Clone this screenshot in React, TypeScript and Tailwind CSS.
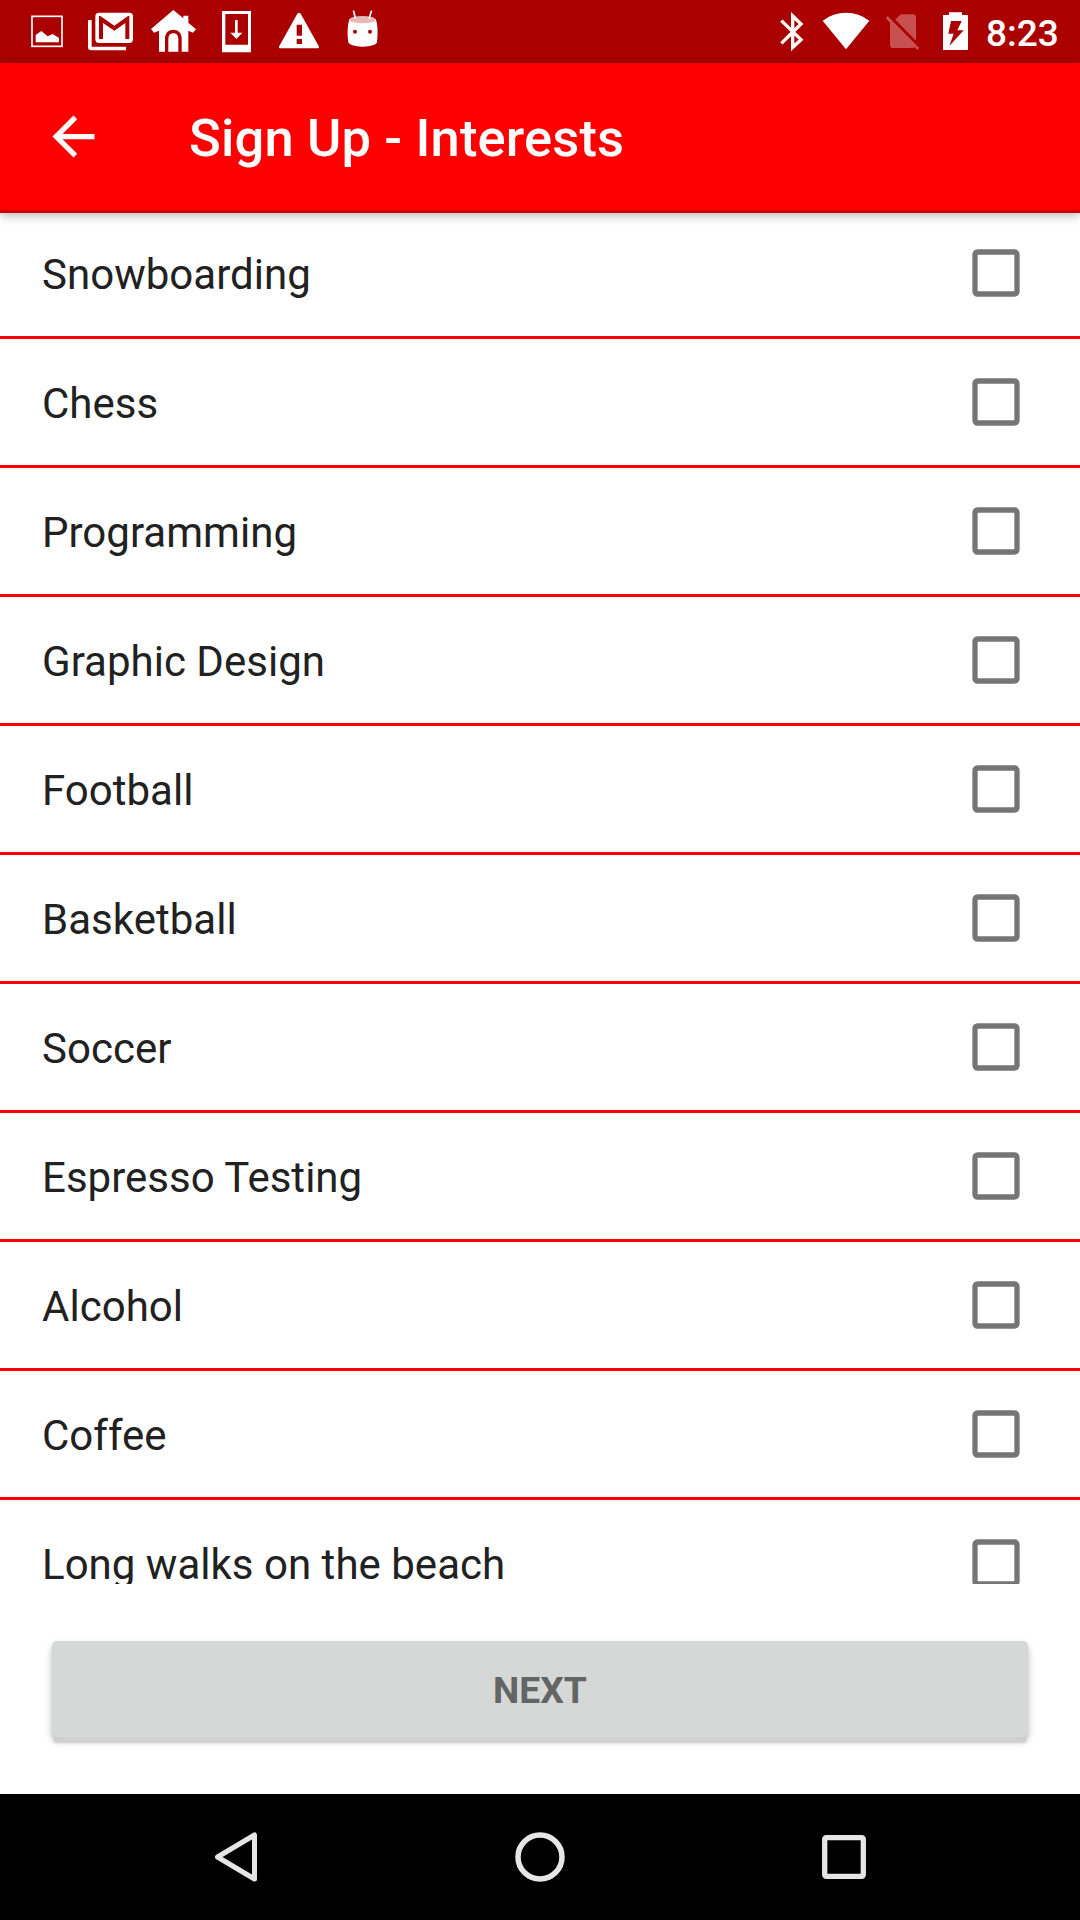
import React from "react";

const interests = [
  "Snowboarding",
  "Chess",
  "Programming",
  "Graphic Design",
  "Football",
  "Basketball",
  "Soccer",
  "Espresso Testing",
  "Alcohol",
  "Coffee",
  "Long walks on the beach",
];

function StatusBar() {
  return (
    <div className="flex h-[63px] shrink-0 justify-between bg-[#ab0000] text-white">
      <div className="flex">
        <svg className="h-[63px] w-[76px]" viewBox="0 0 228 189" fill="currentColor">
          <rect x="96" y="49" width="90" height="90" fill="none" stroke="currentColor" strokeWidth="5" />
          <path d="M107 127V105L124 93L143 109L158 102L177 114V127Z" />
        </svg>
        <svg className="h-[63px] w-[64px]" viewBox="228 0 192 189" fill="currentColor">
          <path d="M264 60H275V140H378V151H274Q264 151 264 141Z" />
          <path
            fillRule="evenodd"
            d="M297 38H388Q399 38 399 49V118Q399 129 388 129H297Q286 129 286 118V49Q286 38 297 38ZM297 48V117H309V69L343 92L376 69V117H388V48H384L343 77L301 48Z"
          />
        </svg>
        <svg className="h-[63px] w-[64px]" viewBox="420 0 192 189" fill="currentColor">
          <path d="M520 30L550 55V47H565V68L588 88L579 98L565 92V155H545V112Q542 89 520 89Q498 89 495 112V155H477V92L462 98L453 87Z" />
          <path d="M505 155V116Q506 100 520 100Q534 100 535 116V155Z" />
        </svg>
        <svg className="h-[63px] w-[64px]" viewBox="612 0 192 189" fill="currentColor">
          <path fillRule="evenodd" d="M666 33H753V157H666ZM676 42V134H744V42Z" />
          <path d="M705 60H713V98H727L709 117L691 98H705Z" />
        </svg>
        <svg className="h-[63px] w-[62px]" viewBox="804 0 186 189" fill="currentColor">
          <path
            fillRule="evenodd"
            d="M892 41Q897 36 902 41L956 138Q959 145 953 145H841Q835 145 838 138ZM890 74V107H906V74ZM890 117V132H906V117Z"
          />
        </svg>
        <svg className="h-[63px] w-[60px]" viewBox="990 0 180 189" fill="currentColor">
          <path d="M1048 57Q1087 76 1127 57Q1136 78 1131 127Q1128 139 1087 140Q1049 139 1045 127Q1039 90 1048 57Z" />
          <ellipse cx="1087.5" cy="59" rx="39" ry="11" fill="#e6b8b8" />
          <path d="M1061 34L1066 54M1114 34L1108 54" stroke="currentColor" strokeWidth="5" strokeLinecap="round" />
          <circle cx="1065" cy="95" r="6" fill="#ab0000" />
          <circle cx="1110" cy="95" r="6" fill="#ab0000" />
        </svg>
      </div>
      <div className="flex w-[320px]">
        <svg className="h-[63px] w-[53px]" viewBox="0 0 159 189">
          <path
            d="M64 62L123 119L98 142V48L123 72L64 130"
            fill="none"
            stroke="currentColor"
            strokeWidth="10"
            strokeMiterlimit="10"
          />
        </svg>
        <svg className="h-[63px] w-[64px]" viewBox="159 0 192 189" fill="currentColor">
          <path d="M188 62Q219 38 258 38Q297 38 328 62L258 148Z" />
        </svg>
        <svg className="h-[63px] w-[53px]" viewBox="351 0 159 189" fill="#c85050">
          <path d="M406 59L422 43H458Q468 43 468 53V122Z" />
          <path d="M383 48L478 144L472 150L464 142Q462 144 458 144H400Q390 144 390 134V68L377 55Z" />
        </svg>
        <svg className="h-[63px] w-[50px]" viewBox="510 0 150 189" fill="currentColor">
          <path fillRule="evenodd" d="M567 37H606V45H624V150H549V45H567ZM573 63L565 101H581L568 138L611 91H592L605 63Z" />
        </svg>
        <span className="ml-[6px] mt-[12px] text-[37px] font-medium leading-[44px]">8:23</span>
      </div>
    </div>
  );
}

function AppBar() {
  return (
    <header className="relative z-10 flex h-[150px] shrink-0 items-start border-b-[3px] border-[#cc0000] bg-[#ff0000] text-white shadow-[0_2px_10px_rgba(0,0,0,0.32)]">
      <button aria-label="Back" className="ml-[42px] mt-[42px] h-[63px] w-[63px]">
        <svg className="h-[63px] w-[63px]" viewBox="0 0 24 24" fill="currentColor">
          <path d="M20 11H7.83l5.59-5.59L12 4l-8 8 8 8 1.41-1.41L7.83 13H20v-2z" />
        </svg>
      </button>
      <h1 className="ml-[84px] mt-[44px] text-[52.5px] font-medium leading-[62px] tracking-[0.15px]">Sign Up - Interests</h1>
    </header>
  );
}

function InterestRow({ label }: { label: string }) {
  return (
    <li className="flex h-[129px] items-center justify-between border-b-[3px] border-[#ff0000] pl-[42px] pr-[59px]">
      <span className="mt-[4px] text-[42px] leading-[50px] tracking-[0.02px] text-[#212121]">{label}</span>
      <svg className="h-[50px] w-[50px]" viewBox="0 0 50 50" role="checkbox" aria-checked="false" aria-label={label}>
        <rect x="4" y="4" width="42" height="42" rx="2.5" fill="none" stroke="#757575" strokeWidth="5.3" />
      </svg>
    </li>
  );
}

function NavigationBar() {
  return (
    <nav className="flex h-[126px] shrink-0 items-center justify-between bg-black px-[209px] text-[#e6e6e6]">
      <svg className="h-[54px] w-[54px]" viewBox="0 0 54 54" fill="none" stroke="currentColor" strokeWidth="5" strokeLinejoin="round">
        <path d="M45.500 5V49L8.500 27Z" />
      </svg>
      <svg className="h-[54px] w-[54px]" viewBox="0 0 54 54" fill="none" stroke="currentColor" strokeWidth="5.5">
        <circle cx="27" cy="27" r="22" />
      </svg>
      <svg className="h-[54px] w-[54px]" viewBox="0 0 54 54" fill="none" stroke="currentColor" strokeWidth="5.3">
        <rect x="7.700" y="7.700" width="38.600" height="38.600" rx="1.500" />
      </svg>
    </nav>
  );
}

export default function App() {
  return (
    <div className="flex h-[1920px] w-[1080px] flex-col overflow-hidden bg-white font-['Roboto',sans-serif]">
      <StatusBar />
      <AppBar />
      <ul className="-mt-[3px] h-[1374px] shrink-0 overflow-hidden">
        {interests.map((label) => (
          <InterestRow key={label} label={label} />
        ))}
      </ul>
      <div className="flex flex-1 flex-col px-[52px] pt-[57px]">
        <button className="h-[96px] rounded-[5px] bg-[#d6d7d7] pt-[1px] text-[37.2px] font-bold leading-[44px] text-[#636464] shadow-[0_7px_2px_-1px_#d0d0d0,0_4px_7px_rgba(0,0,0,0.28)]">
          NEXT
        </button>
      </div>
      <NavigationBar />
    </div>
  );
}
